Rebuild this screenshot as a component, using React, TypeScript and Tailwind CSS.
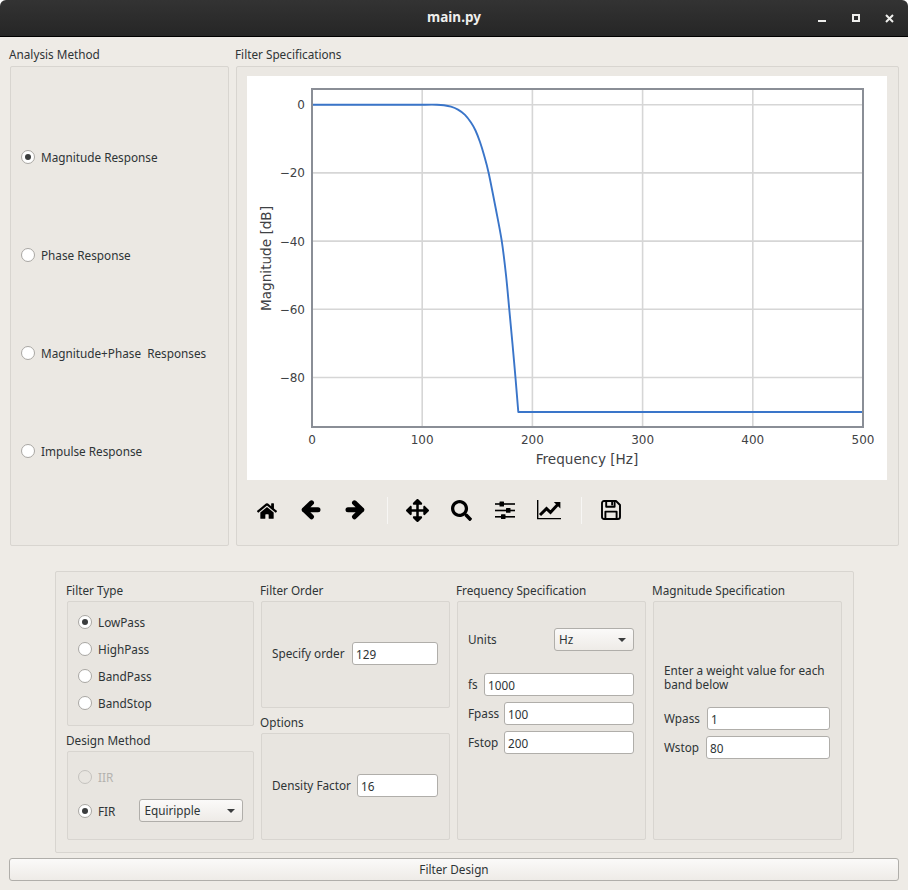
import { FaHome, FaArrowsAlt, FaSearch } from "react-icons/fa";

const font = "[font-family:'Noto_Sans',sans-serif]";

function Radio({ label, checked, disabled }: { label: string; checked?: boolean; disabled?: boolean }) {
  return (
    <div className={`flex items-center h-5 ${disabled ? "text-[#b5b3af]" : ""}`}>
      <span
        className={`flex items-center justify-center w-[14px] h-[14px] rounded-full border ${
          disabled ? "border-[#c4c2be] bg-[#e8e5e0]" : "border-[#a9a7a3] bg-white"
        }`}
      >
        {checked && <span className="block w-[6px] h-[6px] rounded-full bg-[#3b3d3e]" />}
      </span>
      <span className="ml-[6px] mt-[2px] whitespace-pre">{label}</span>
    </div>
  );
}

function Field({ value, className = "" }: { value: string; className?: string }) {
  return (
    <input
      readOnly
      value={value}
      className={`h-[23px] min-w-0 bg-white border border-[#b0aeaa] rounded-[3px] pl-[3px] text-[#2e3436] outline-none ${className}`}
    />
  );
}

function Combo({ value, className = "" }: { value: string; className?: string }) {
  return (
    <div
      className={`flex items-center justify-between h-[23px] pl-[4px] pr-[7px] border border-[#b0aeaa] rounded-[3px] bg-gradient-to-b from-[#fbfaf9] to-[#eeebe7] ${className}`}
    >
      <span>{value}</span>
      <span className="w-0 h-0 border-l-[4px] border-r-[4px] border-t-[4px] border-l-transparent border-r-transparent border-t-[#3b3d3e]" />
    </div>
  );
}

function Group({
  title,
  className = "",
  children,
  box = "",
  head = "leading-[17px]",
}: {
  title: string;
  className?: string;
  children: React.ReactNode;
  box?: string;
  head?: string;
}) {
  return (
    <div className={`flex flex-col ${className}`}>
      <div className={`h-[19px] -ml-px shrink-0 ${head}`}>{title}</div>
      <div className={`flex-1 min-h-0 rounded-[2px] border border-[#d8d5d0] ${box || ""}`}>{children}</div>
    </div>
  );
}

const curvePoints: [number, number][] = [
  [175, 28.7], [190, 28.7], [197, 29.2], [204, 30.6], [211, 33.6], [218, 38.8], [224, 46.5], [228.5, 54.5],
  [233, 66], [237, 79], [241.6, 96.7], [248.7, 132.3], [254.7, 164.7], [259, 199], [262.3, 233.7],
  [265.5, 268], [268.5, 302], [271.3, 336],
];

function smooth(pts: [number, number][]) {
  let d = `M65 28.7 L${pts[0][0]} ${pts[0][1]}`;
  for (let i = 0; i < pts.length - 1; i++) {
    const p0 = pts[Math.max(0, i - 1)];
    const p1 = pts[i];
    const p2 = pts[i + 1];
    const p3 = pts[Math.min(pts.length - 1, i + 2)];
    const c1x = p1[0] + (p2[0] - p0[0]) / 6;
    const c1y = p1[1] + (p2[1] - p0[1]) / 6;
    const c2x = p2[0] - (p3[0] - p1[0]) / 6;
    const c2y = p2[1] - (p3[1] - p1[1]) / 6;
    d += ` C${c1x} ${c1y} ${c2x} ${c2y} ${p2[0]} ${p2[1]}`;
  }
  return d + " L616 336";
}

function Plot() {
  const xs = [0, 100, 200, 300, 400, 500];
  const ys = [0, -20, -40, -60, -80];
  const X = (v: number) => 65 + v * 1.102;
  const Y = (v: number) => 28.7 - v * 3.41;
  return (
    <svg width="640" height="404" viewBox="0 0 640 404" className="block bg-white shrink-0">
      {xs.slice(1, 5).map((v) => (
        <line key={v} x1={X(v)} x2={X(v)} y1="13" y2="351" stroke="#d6d6d6" strokeWidth="1.6" />
      ))}
      {ys.map((v) => (
        <line key={v} x1="65" x2="616" y1={Y(v)} y2={Y(v)} stroke="#d6d6d6" strokeWidth="1.6" />
      ))}
      <path d={smooth(curvePoints)} fill="none" stroke="#3a75c9" strokeWidth="1.9" strokeLinejoin="round" />
      <rect x="65" y="13" width="551" height="338" fill="none" stroke="#8a8e96" strokeWidth="2" />
      <g fontFamily="DejaVu Sans" fontSize="12" fill="#3f4245">
        {xs.map((v) => (
          <text key={v} x={X(v)} y="368" textAnchor="middle">
            {v}
          </text>
        ))}
        {ys.map((v) => (
          <text key={v} x="58" y={Y(v) + 4.5} textAnchor="end">
            {v === 0 ? "0" : `\u2212${-v}`}
          </text>
        ))}
        <text x="340" y="388" textAnchor="middle" fontSize="13.6">
          Frequency [Hz]
        </text>
        <text transform="translate(24 182.5) rotate(-90)" textAnchor="middle" fontSize="13.6">
          Magnitude [dB]
        </text>
      </g>
    </svg>
  );
}

function ArrowIcon({ flip }: { flip?: boolean }) {
  return (
    <svg width="20" height="20" viewBox="0 0 20 20" fill="none" stroke="#000" strokeWidth="5" strokeLinecap="round" strokeLinejoin="round">
      <path d={flip ? "M16.8 9.8H3M9.5 2.8L16.8 9.8L9.5 16.8" : "M3.2 9.8H17M10.5 2.8L3.2 9.8L10.5 16.8"} />
    </svg>
  );
}

function SlidersIcon() {
  return (
    <svg width="20" height="18" viewBox="0 0 20 18" fill="#000">
      <rect x="0" y="2.2" width="20" height="1.6" />
      <rect x="0" y="8.7" width="20" height="1.6" />
      <rect x="0" y="15" width="20" height="1.6" />
      <rect x="4.5" y="0.6" width="4.5" height="4.8" rx="0.5" />
      <rect x="11" y="7" width="4.5" height="4.8" rx="0.5" />
      <rect x="6" y="13.2" width="4.5" height="4.8" rx="0.5" />
    </svg>
  );
}

function ChartIcon() {
  return (
    <svg width="24" height="20" viewBox="0 0 24 20" fill="none" stroke="#000">
      <path d="M0.7 0V18.6H24" strokeWidth="1.4" />
      <path d="M3 15L9.5 8.6L13.5 12.4L21 4.2" strokeWidth="3" />
      <path d="M16.8 2H23.4V8.6Z" fill="#000" stroke="none" />
    </svg>
  );
}

function SaveIcon() {
  return (
    <svg width="20" height="20" viewBox="0 0 20 20" fill="none" stroke="#000" strokeWidth="1.9" strokeLinejoin="round">
      <path d="M3 1H15L19 5V17A2 2 0 0 1 17 19H3A2 2 0 0 1 1 17V3A2 2 0 0 1 3 1Z" />
      <path d="M5.2 1V6.8H13.6V1" />
      <path d="M4.4 19V11.6H15.6V19" />
      <rect x="10.2" y="2" width="1.8" height="3.4" fill="#000" stroke="none" />
    </svg>
  );
}

function ToolButton({ children, className = "w-[44px]" }: { children: React.ReactNode; className?: string }) {
  return <div className={`flex items-center justify-center shrink-0 ${className}`}>{children}</div>;
}

export default function App() {
  return (
    <div className={`w-[908px] h-[890px] flex flex-col overflow-hidden bg-white text-[11.75px] leading-none text-[#2e3436] ${font}`}>
      {/* Title bar */}
      <header className="relative h-[37px] shrink-0 rounded-t-[6px] border-b border-black bg-gradient-to-b from-[#333333] to-[#262626] flex items-center justify-center">
        <span className="font-bold text-[13.5px] text-[#eeeeec]">main.py</span>
        <div className="absolute right-[14px] top-[14px] flex items-start">
          <span className="w-[8px] h-[2px] mt-[6px] bg-[#eeeeec]" />
          <span className="w-[8px] h-[8px] ml-[26px] border-2 border-[#eeeeec]" />
          <svg className="ml-[25px]" width="9" height="9" viewBox="0 0 9 9" stroke="#eeeeec" strokeWidth="2">
            <path d="M1 1L8 8M8 1L1 8" />
          </svg>
        </div>
      </header>

      <main className="flex-1 min-h-0 flex flex-col bg-[#eeebe6] pt-[10px]">
        {/* Upper panels */}
        <section className="flex h-[499px] shrink-0 pl-[10px] pr-[9px] gap-[7px]">
          <Group title="Analysis Method" head="leading-[15px]" className="w-[219px]" box="bg-[#ebe8e3] flex flex-col justify-between pt-[80px] pb-[84px] pl-[10px]">
            <Radio label="Magnitude Response" checked />
            <Radio label="Phase Response" />
            <Radio label="Magnitude+Phase  Responses" />
            <Radio label="Impulse Response" />
          </Group>
          <Group title="Filter Specifications" head="leading-[15px]" className="flex-1" box="bg-[#ebe8e3] pt-[9px] pl-[10px]">
            <Plot />
            <div className="flex items-center h-[60px]">
              <ToolButton className="w-[40px] mr-[2px] mt-[1px]"><FaHome size={20} color="#000" /></ToolButton>
              <ToolButton><ArrowIcon /></ToolButton>
              <ToolButton><ArrowIcon flip /></ToolButton>
              <span className="block w-px h-[27px] ml-[10px] mr-[7px] bg-[#f7f6f4] shrink-0" />
              <ToolButton><FaArrowsAlt size={23} color="#000" /></ToolButton>
              <ToolButton><FaSearch size={21} color="#000" /></ToolButton>
              <ToolButton><SlidersIcon /></ToolButton>
              <ToolButton><ChartIcon /></ToolButton>
              <span className="block w-px h-[27px] ml-[10px] mr-[7px] bg-[#f7f6f4] shrink-0" />
              <ToolButton><SaveIcon /></ToolButton>
            </div>
          </Group>
        </section>

        {/* Lower panel */}
        <section className="mt-[25px] ml-[55px] w-[799px] h-[282px] shrink-0 rounded-[2px] border border-[#d8d5d0] bg-[#ebe8e3] pl-[11px] pt-[10px] flex items-start gap-[7px]">
          <div className="w-[187px] h-[258px] flex flex-col gap-[6px]">
            <Group title="Filter Type" className="h-[144px]" box="bg-[#e8e5e0] flex flex-col gap-[7px] pt-[10px] pl-[10px]">
              <Radio label="LowPass" checked />
              <Radio label="HighPass" />
              <Radio label="BandPass" />
              <Radio label="BandStop" />
            </Group>
            <Group title="Design Method" className="h-[108px]" box="bg-[#e8e5e0] pt-[15px] pl-[10px]">
              <Radio label="IIR" disabled />
              <div className="flex items-center mt-[12px]">
                <Radio label="FIR" checked />
                <Combo value="Equiripple" className="ml-[24px] w-[104px]" />
              </div>
            </Group>
          </div>

          <div className="w-[189px] h-[258px] flex flex-col gap-[6px]">
            <Group title="Filter Order" className="h-[126px]" box="bg-[#e8e5e0] flex items-center pl-[10px] pr-[11px] pb-[2px]">
              <span className="w-[80px] whitespace-nowrap shrink-0">Specify order</span>
              <Field value="129" className="flex-1" />
            </Group>
            <Group title="Options" className="h-[126px]" box="bg-[#e8e5e0] flex items-center pl-[10px] pr-[11px] pb-[2px]">
              <span className="w-[85px] whitespace-nowrap shrink-0">Density Factor</span>
              <Field value="16" className="flex-1" />
            </Group>
          </div>

          <Group title="Frequency Specification" className="w-[189px] h-[258px]" box="bg-[#e8e5e0] pt-[26px] pl-[10px] pr-[11px]">
            <div className="flex items-center justify-between">
              <span>Units</span>
              <Combo value="Hz" className="w-[80px]" />
            </div>
            <div className="flex items-center mt-[22px]">
              <span className="w-[16px] shrink-0">fs</span>
              <Field value="1000" className="flex-1" />
            </div>
            <div className="flex items-center mt-[6px]">
              <span className="w-[36px] shrink-0">Fpass</span>
              <Field value="100" className="flex-1" />
            </div>
            <div className="flex items-center mt-[6px]">
              <span className="w-[36px] shrink-0">Fstop</span>
              <Field value="200" className="flex-1" />
            </div>
          </Group>

          <Group title="Magnitude Specification" className="w-[189px] h-[258px]" box="bg-[#e8e5e0] pt-[61px] pl-[10px] pr-[11px]">
            <p className="leading-[14px]">Enter a weight value for each band below</p>
            <div className="flex items-center mt-[16px]">
              <span className="w-[43px] shrink-0">Wpass</span>
              <Field value="1" className="flex-1" />
            </div>
            <div className="flex items-center mt-[6px]">
              <span className="w-[42px] shrink-0">Wstop</span>
              <Field value="80" className="flex-1" />
            </div>
          </Group>
        </section>

        <button className="mt-[5px] ml-[9px] w-[890px] h-[23px] shrink-0 border border-[#b0aeaa] rounded-[3px] bg-gradient-to-b from-[#fbfaf9] to-[#eeebe7] text-[#2e3436]">
          Filter Design
        </button>
      </main>
    </div>
  );
}
